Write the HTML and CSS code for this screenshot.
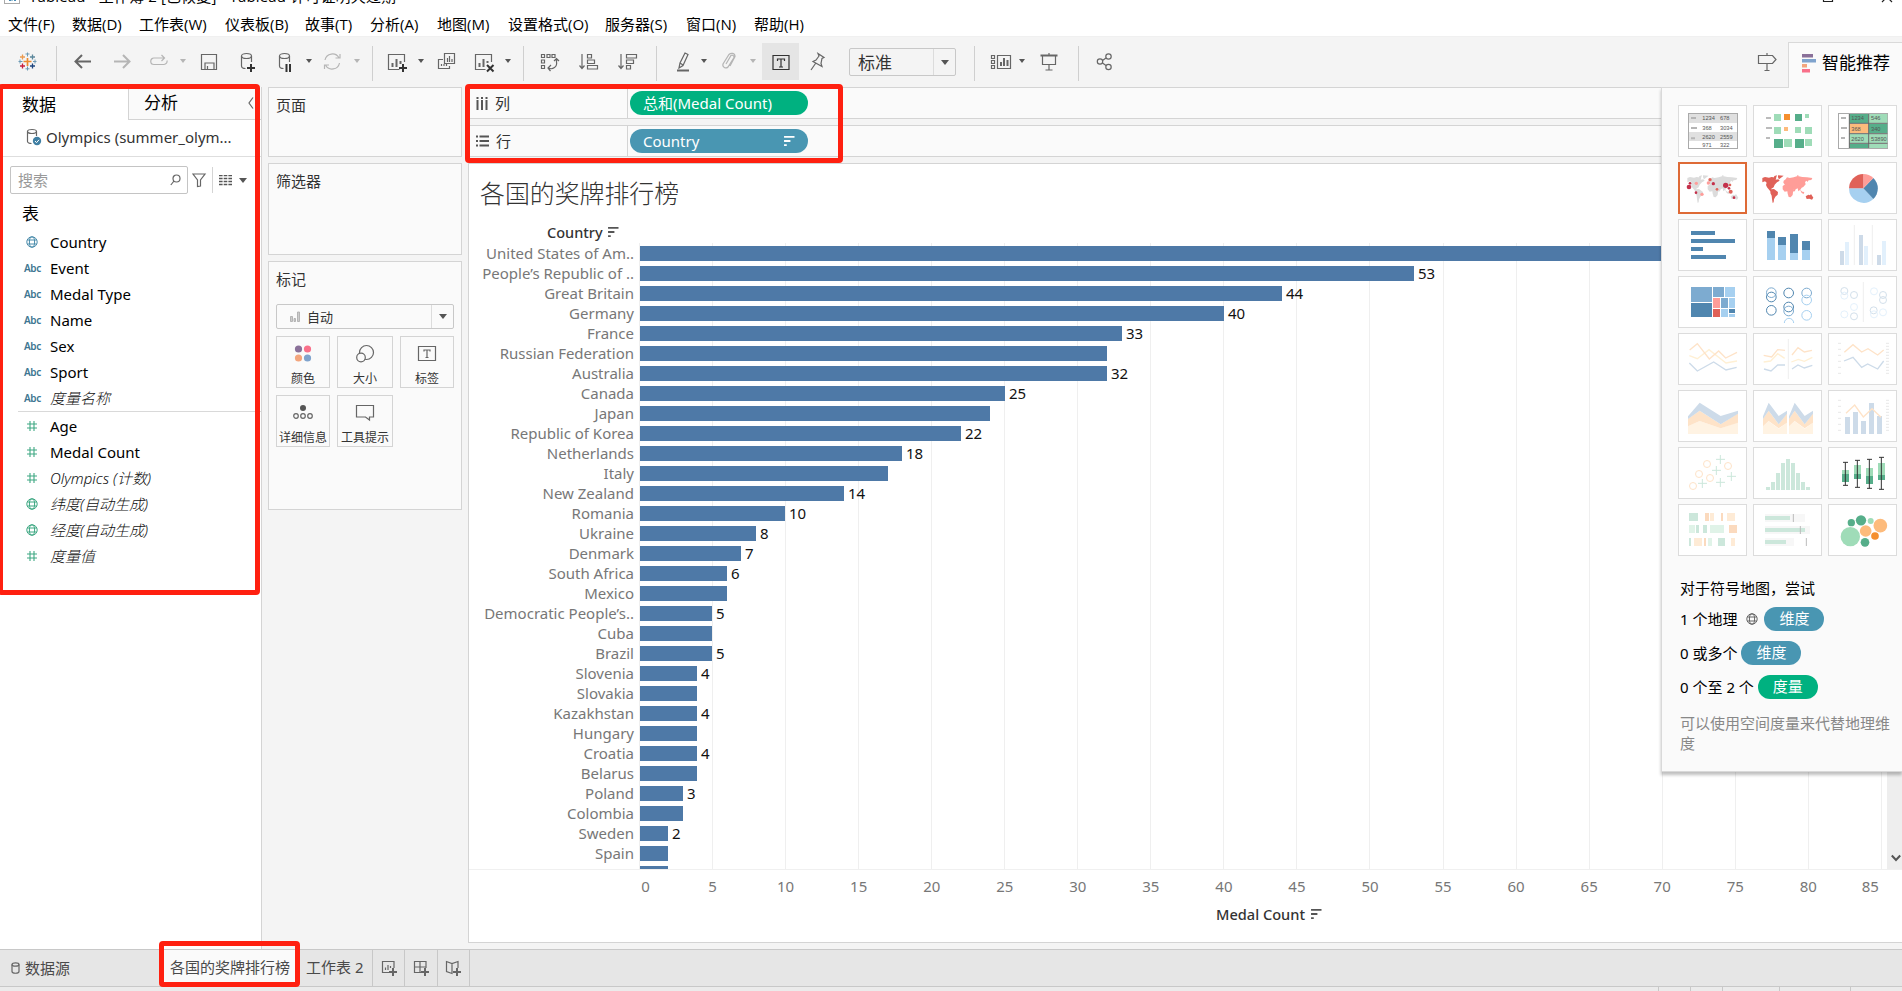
FILE: index.html
```html
<!DOCTYPE html>
<html lang="zh-CN">
<head>
<meta charset="utf-8">
<title>Tableau - 工作簿 2</title>
<link rel="stylesheet" href="styles.css">
</head>
<body>
<svg class="defs" width="0" height="0">
  <defs>
    <symbol id="globe" viewBox="0 0 12 12"><g fill="none" stroke="currentColor"><circle cx="6" cy="6" r="5.2"/><ellipse cx="6" cy="6" rx="2.6" ry="5.2"/><path d="M1.3 4h9.4M1.3 8h9.4"/></g></symbol>
    <symbol id="hash" viewBox="0 0 12 12"><path d="M4 1v10M8 1v10M1 4h10M1 8h10" fill="none" stroke="currentColor" stroke-width="1.1"/></symbol>
    <symbol id="sort" viewBox="0 0 12 11"><path d="M0 1h11.500M0 5.500h7M0 10h3" fill="none" stroke="currentColor" stroke-width="2"/></symbol>
    <symbol id="map-west" viewBox="336 255 160 90"><path d="M337 264l8-3 12 2 8-2 14 2-2 6 8-1 4 4-8 5-7 7-3 8-8 5 1 5 6 2-2 4-6-3-6-7-5-6-3-7 2-7-5-4-8 3zM373 258l8-2-3 8-7 1zM384 256l17 1-8 6-6 5-3-6z"/><path d="M363 298l9-1 12 9-1 8-7 6-4 8-1 9-3 2-2-12-1-10-4-8z"/><path d="M467 319l8-5 5 2 3-4 7 11-4 6-8-3-8 1z"/></symbol>
    <symbol id="map-east" viewBox="336 255 160 90"><path d="M400 278l1-6 6-4 4-6 8 2 12-2 12-4 14 3 14 1 16 2-3 6-8 1-4 5-2-4-5 4 2 7-7 8-5 2-4 6-6 5-2-9-6 3-3 7-5-8-8-2-2-6-7-1-3 4-3-6z"/><path d="M398 288l8-5 12 3 8 2 4 10 4 1-5 8-1 8-6 7-6-1-3-10-1-7-8 1-6-7z"/><path d="M450 299l7 6 6 1-2 6-6-3zM441 256l5-2-2 5z"/></symbol>
  </defs>
</svg>

<header class="top">
  <div class="titlebar">
    <svg class="app-icon" width="16" height="16" viewBox="0 0 16 16"><rect x=".5" y=".5" width="15" height="15" fill="#fff" stroke="#aaa"/><path d="M8 4v9M4 10h8M5 12.500h2M10 12.500h2" stroke="#4a8db5"/></svg>
    <span class="title-text">Tableau - 工作簿 2 [已恢复] - Tableau 许可证明天过期</span>
    <svg class="win-buttons" width="80" height="12" viewBox="0 0 80 12"><path d="M1.500 0v10.500h9V0M60 11l5-5 5 5" fill="none" stroke="#222" stroke-width="1.200"/></svg>
  </div>
  <nav class="menu"><span>文件(F)</span><span>数据(D)</span><span>工作表(W)</span><span>仪表板(B)</span><span>故事(T)</span><span>分析(A)</span><span>地图(M)</span><span>设置格式(O)</span><span>服务器(S)</span><span>窗口(N)</span><span>帮助(H)</span></nav>
</header>

<div class="toolbar">
  <svg class="ic m15" viewBox="0 0 24 24"><g fill="none" stroke-width="1.300"><path d="M12.500 9v8M8.500 12.500h8" stroke="#eb8a2f" stroke-width="1.700"/><path d="M7.500 5.500v5M5 8h5" stroke="#eb9a4f"/><path d="M17.500 5.500v5M15 8h5" stroke="#5b879b"/><path d="M7.500 14.500v5M5 17h5" stroke="#c7203f"/><path d="M17.500 14.500v5M15 17h5" stroke="#1f457e"/><path d="M12.500 3.500v4M10.500 5h4M5 10.500v4M3.500 12.500h4M20 10.500v4M18 12.500h3.500M12.500 17.500v4M10.500 19.800h4" stroke="#6d9ab5" stroke-width="1"/></g></svg>
  <i class="sep m17"></i>
  <svg class="ic m14" viewBox="0 0 24 24"><path d="M20 12.500H5M11 6l-6.500 6.500L11 19" class="ln w2"/></svg>
  <svg class="ic off m15" viewBox="0 0 24 24"><path d="M4 12.500h15M13 6l6.500 6.500L13 19" class="ln w2"/></svg>
  <svg class="ic off m13" viewBox="0 0 24 24"><path d="M17 9H7a3.200 3.200 0 0 0 0 6.500h10a3.200 3.200 0 0 0 3-4M14.500 6l3 3-3 3" class="ln"/></svg>
  <i class="arr off m8"></i>
  <svg class="ic m10" viewBox="0 0 24 24"><path d="M4.500 5.500h15v15h-15zM8 20v-6h9v6M10.500 20v-3" class="ln"/></svg>
  <svg class="ic m14" viewBox="0 0 24 24"><g class="ln"><ellipse cx="11.500" cy="7" rx="5" ry="2.500"/><path d="M6.500 7v10c0 2 2 2.500 4 2.500M16.500 7v6"/></g><path d="M16 15v8M12 19h8" class="ln dk"/></svg>
  <svg class="ic m14" viewBox="0 0 24 24"><g class="ln"><ellipse cx="11.500" cy="7" rx="5" ry="2.500"/><path d="M6.500 7v10c0 2 2 2.500 4 2.500M16.500 7v6"/></g><path d="M13.500 15v8M17 15v8" class="ln dk"/></svg>
  <i class="arr m8"></i>
  <svg class="ic off m7" viewBox="0 0 24 24"><path d="M5 11a7.500 7.500 0 0 1 14-2M19.500 14a7.500 7.500 0 0 1-14 2M15.500 9h4.500V5M9 16H4.500v4" class="ln"/></svg>
  <i class="arr off m9"></i>
  <i class="sep m11"></i>
  <svg class="ic m12" viewBox="0 0 24 24"><path d="M19.500 13V5.500h-16v15h11" class="ln"/><path d="M7.500 18v-4M11.500 18v-8M15.500 15v-3" class="ln w2"/><path d="M18 15v8M14 19h8" class="ln dk"/></svg>
  <i class="arr m8"></i>
  <svg class="ic m9" viewBox="0 0 24 24"><path d="M10.500 4.500h10v10h-10zM9 10.500H4.500v9h11V17M13.500 13V9M15.500 13V7M18 13v-3M7.500 17v-2M10 17v-2M12.500 17v-2" class="ln"/></svg>
  <svg class="ic m14" viewBox="0 0 24 24"><path d="M19.500 13V5.500h-16v15h10" class="ln"/><path d="M7.500 18v-4M11.500 18v-8M15.500 14v-2" class="ln w2"/><path d="M15 16l6.500 6.500M21.500 16L15 22.500" class="ln dk"/></svg>
  <i class="arr m8"></i>
  <i class="sep m11"></i>
  <svg class="ic m13" viewBox="0 0 24 24"><path d="M4.500 5.500h3v3h-3zM10 5.500h3v3h-3zM15 5.500h3v3h-3zM4.500 11h3v3h-3zM4.500 16.500h3v3h-3z" class="ln"/><path d="M19.500 10v3a5.500 5.500 0 0 1-8 6M17 12l2.500-2.500L22 12M14 16l-3 3 2.500 3" class="ln"/></svg>
  <svg class="ic m16" viewBox="0 0 24 24"><path d="M5 5v14M2.500 16.500L5 19.500l2.500-3M10.500 5.500h4v3.500h-4zM10.500 11h7v3.500h-7zM10.500 16.500h10V20h-10z" class="ln"/></svg>
  <svg class="ic m15" viewBox="0 0 24 24"><path d="M5 5v14M2.500 16.500L5 19.500l2.500-3M10.500 5.500h10V9h-10zM10.500 11h7v3.500h-7zM10.500 16.500h4V20h-4z" class="ln"/></svg>
  <i class="sep m16"></i>
  <svg class="ic m14" viewBox="0 0 24 24"><path d="M14 4l3 1.500-5 11-4 2.500 1-5zM9 14l3 2" class="ln"/><path d="M6 21.500h12" class="ln w2"/></svg>
  <i class="arr m5"></i>
  <svg class="ic off m9" viewBox="0 0 24 24"><path d="M9 15l5-8.500a2 2 0 0 1 3 2L11 18a3 3 0 0 1-5-3l6-9.500c2-2 6-1.500 6 2L13 17" class="ln"/></svg>
  <i class="arr off m8"></i>
  <span class="tbtn m5"><svg width="24" height="24" viewBox="0 0 24 24"><path d="M4 5.500h16v14H4zM8.500 11V9h7v2M12 9v8M10 17h4" class="ln" style="stroke:#333"/></svg></span>
  <svg class="ic m6" viewBox="0 0 24 24"><path d="M13 4.500l6 4-2 1-1 5 1 3-9-5 3-1.500 3-4zM10.500 14.500L6 21" class="ln"/></svg>
  <div class="sel fit m20"><span>标准</span><b><i class="arr big"></i></b></div>
  <i class="sep m18"></i>
  <svg class="ic m14" viewBox="0 0 24 24"><path d="M2.500 6.500h3v3h-3zM2.500 11.500h3v3h-3zM2.500 16.500h3v3h-3zM8.500 6.500h13v13h-13z" class="ln"/><path d="M12 17v-4M15 17V9M18.500 17v-6" class="ln w2"/></svg>
  <i class="arr m5"></i>
  <svg class="ic m11" viewBox="0 0 24 24"><path d="M12 4v2M5.500 6.500v9h13v-9M12 16v5M8.500 21h7" class="ln"/><path d="M3.500 6.500h17" class="ln w2"/></svg>
  <i class="sep m17"></i>
  <svg class="ic m14" viewBox="0 0 24 24"><g class="ln"><circle cx="7" cy="12.500" r="2.700"/><circle cx="15.500" cy="7.500" r="2.700"/><circle cx="15.500" cy="18" r="2.700"/><path d="M9.500 11.500l3.500-2.500M9.500 14l3.500 2.500"/></g></svg>
  <svg class="ic push" viewBox="0 0 24 24"><path d="M3.500 6.500h14l3.500 4-3.500 4h-14zM12 4v2.500M12 14.500V21M9.500 21.500h5" class="ln"/></svg>
  <div class="showme-tab">
    <svg width="15" height="20" viewBox="0 0 15 20"><path fill="#8a7099" d="M0 1h11v3.500H0z"/><path fill="#7fa3cd" d="M0 6h14v3.500H0z"/><path fill="#f3a57d" d="M0 11h5v3.500H0z"/><path fill="#f9708a" d="M0 16h8v3.500H0z"/></svg>
    <span>智能推荐</span>
  </div>
</div>

<div class="main">
  <aside class="data">
    <div class="dtabs"><span class="on">数据</span><span class="offtab">分析<svg width="6" height="12" viewBox="0 0 6 12"><path d="M5 .5L1 6l4 5.500" class="ln"/></svg></span></div>
    <div class="source"><svg width="16" height="18" viewBox="0 0 16 18"><g class="ln"><ellipse cx="6" cy="3.500" rx="4.500" ry="2"/><path d="M1.500 3.500v10c0 1 2 2 4 2M10.500 3.500V8"/></g><circle cx="11" cy="13" r="4.200" fill="#3f7fa3"/><path d="M9 13l1.500 1.700L13 11.800" fill="none" stroke="#fff"/></svg><span>Olympics (summer_olym...</span></div>
    <div class="searchrow">
      <div class="search"><span>搜索</span><svg width="11" height="12" viewBox="0 0 11 12"><circle cx="6.500" cy="4.500" r="3.500" class="ln"/><path d="M4 7L.8 11" class="ln"/></svg></div>
      <svg class="funnel" width="15" height="15" viewBox="0 0 15 15"><path d="M1 1h12L8.500 7v6l-3 .5V7z" class="ln"/></svg>
      <i class="vs"></i>
      <svg class="list" width="13" height="11" viewBox="0 0 13 11"><path d="M0 .5h13M0 3.500h13M0 6.500h13M0 9.500h13" stroke="#555" stroke-width="1.300" stroke-dasharray="3.600 1.100"/></svg>
      <i class="arr big"></i>
    </div>
    <h3>表</h3>
    <ul class="fields">
      <li class="dim"><svg width="12" height="12"><use href="#globe"/></svg>Country</li>
      <li class="dim"><b>Abc</b>Event</li>
      <li class="dim"><b>Abc</b>Medal Type</li>
      <li class="dim"><b>Abc</b>Name</li>
      <li class="dim"><b>Abc</b>Sex</li>
      <li class="dim"><b>Abc</b>Sport</li>
      <li class="dim"><b>Abc</b><em>度量名称</em></li>
    </ul>
    <ul class="fields measures">
      <li><svg width="12" height="12"><use href="#hash"/></svg>Age</li>
      <li><svg width="12" height="12"><use href="#hash"/></svg>Medal Count</li>
      <li><svg width="12" height="12"><use href="#hash"/></svg><em>Olympics (计数)</em></li>
      <li><svg width="12" height="12"><use href="#globe"/></svg><em>纬度(自动生成)</em></li>
      <li><svg width="12" height="12"><use href="#globe"/></svg><em>经度(自动生成)</em></li>
      <li><svg width="12" height="12"><use href="#hash"/></svg><em>度量值</em></li>
    </ul>
  </aside>

  <section class="cards">
    <div class="card pages">页面</div>
    <div class="card filters">筛选器</div>
    <div class="card marks">
      <div>标记</div>
      <div class="sel marktype"><svg width="10" height="11" viewBox="0 0 10 11"><path d="M.5 5.500h2v5h-2zM4 7.500h1.500v3H4zM7.500 1h2v9.500h-2z" fill="#ccc" stroke="#aaa" stroke-width=".8"/></svg><span>自动</span><b><i class="arr big"></i></b></div>
      <div class="mgrid">
        <div><svg width="20" height="20" viewBox="0 0 20 20"><circle cx="5.500" cy="5" r="3.600" fill="#8a7099"/><circle cx="14.500" cy="5" r="3.600" fill="#f9708a"/><circle cx="5.500" cy="14" r="3.600" fill="#f3a57d"/><circle cx="14.500" cy="14" r="3.600" fill="#7fa3cd"/></svg>颜色</div>
        <div><svg width="20" height="20" viewBox="0 0 20 20"><g class="ln"><circle cx="11.500" cy="8.500" r="7"/><circle cx="6" cy="13.500" r="4.300" style="fill:#fafafa"/></g></svg>大小</div>
        <div><svg width="20" height="20" viewBox="0 0 20 20"><path d="M1.500 2.500h17v14h-17zM7 7.500V6h6v1.500M10 6v7.500M8.500 13.500h3" class="ln"/></svg>标签</div>
        <div><svg width="20" height="20" viewBox="0 0 20 20"><circle cx="10" cy="5" r="3" fill="#555"/><g class="ln"><circle cx="3" cy="13" r="2.300"/><circle cx="10" cy="13" r="2.300"/><circle cx="17" cy="13" r="2.300"/></g></svg>详细信息</div>
        <div><svg width="20" height="20" viewBox="0 0 20 20"><path d="M1.500 2.500h17v11.500h-4V17l-4-3h-9z" class="ln"/></svg>工具提示</div>
      </div>
    </div>
  </section>

  <section class="work">
    <div class="shelf"><div class="sl"><svg width="12" height="13" viewBox="0 0 12 13"><path d="M1.500 3v10M6 3v10M10.500 3v10M1.500 0v2M6 0v2M10.500 0v2" stroke="#555" stroke-width="2"/></svg>列</div><div class="pill green">总和(Medal Count)</div></div>
    <div class="shelf"><div class="sl"><svg width="13" height="12" viewBox="0 0 13 12"><path d="M3.500 1.500H13M3.500 6H13M3.500 10.500H13M0 1.500h2M0 6h2M0 10.500h2" stroke="#555" stroke-width="2"/></svg>行</div><div class="pill blue">Country<svg width="11" height="10"><use href="#sort"/></svg></div></div>
    <div class="view">
      <h1>各国的奖牌排行榜</h1>
      <div class="colhead">Country<svg width="11" height="10"><use href="#sort"/></svg></div>
      <div class="chart">
        <div class="grid"><i></i><i></i><i></i><i></i><i></i><i></i><i></i><i></i><i></i><i></i><i></i><i></i><i></i><i></i><i></i><i></i><i></i><i></i></div>
        <div class="rows">
          <div class="row"><span>United States of Am..</span><i style="width:1183px"></i></div>
          <div class="row"><span>People’s Republic of ..</span><i style="width:774px"></i>53</div>
          <div class="row"><span>Great Britain</span><i style="width:642px"></i>44</div>
          <div class="row"><span>Germany</span><i style="width:584px"></i>40</div>
          <div class="row"><span>France</span><i style="width:482px"></i>33</div>
          <div class="row"><span>Russian Federation</span><i style="width:467px"></i></div>
          <div class="row"><span>Australia</span><i style="width:467px"></i>32</div>
          <div class="row"><span>Canada</span><i style="width:365px"></i>25</div>
          <div class="row"><span>Japan</span><i style="width:350px"></i></div>
          <div class="row"><span>Republic of Korea</span><i style="width:321px"></i>22</div>
          <div class="row"><span>Netherlands</span><i style="width:262px"></i>18</div>
          <div class="row"><span>Italy</span><i style="width:248px"></i></div>
          <div class="row"><span>New Zealand</span><i style="width:204px"></i>14</div>
          <div class="row"><span>Romania</span><i style="width:145px"></i>10</div>
          <div class="row"><span>Ukraine</span><i style="width:116px"></i>8</div>
          <div class="row"><span>Denmark</span><i style="width:101px"></i>7</div>
          <div class="row"><span>South Africa</span><i style="width:87px"></i>6</div>
          <div class="row"><span>Mexico</span><i style="width:87px"></i></div>
          <div class="row"><span>Democratic People’s..</span><i style="width:72px"></i>5</div>
          <div class="row"><span>Cuba</span><i style="width:72px"></i></div>
          <div class="row"><span>Brazil</span><i style="width:72px"></i>5</div>
          <div class="row"><span>Slovenia</span><i style="width:57px"></i>4</div>
          <div class="row"><span>Slovakia</span><i style="width:57px"></i></div>
          <div class="row"><span>Kazakhstan</span><i style="width:57px"></i>4</div>
          <div class="row"><span>Hungary</span><i style="width:57px"></i></div>
          <div class="row"><span>Croatia</span><i style="width:57px"></i>4</div>
          <div class="row"><span>Belarus</span><i style="width:57px"></i></div>
          <div class="row"><span>Poland</span><i style="width:43px"></i>3</div>
          <div class="row"><span>Colombia</span><i style="width:43px"></i></div>
          <div class="row"><span>Sweden</span><i style="width:28px"></i>2</div>
          <div class="row"><span>Spain</span><i style="width:28px"></i></div>
          <div class="row"><span>Norway</span><i style="width:28px"></i>2</div>
        </div>
        <div class="scroll"><svg width="10" height="8" viewBox="0 0 10 8"><path d="M.8 1.500L5 6l4.200-4.500" fill="none" stroke="#555" stroke-width="2"/></svg></div>
      </div>
      <div class="axis"><span class="first">0</span><span>5</span><span>10</span><span>15</span><span>20</span><span>25</span><span>30</span><span>35</span><span>40</span><span>45</span><span>50</span><span>55</span><span>60</span><span>65</span><span>70</span><span>75</span><span>80</span><span class="last">85</span></div>
      <div class="axtitle">Medal Count<svg width="11" height="10"><use href="#sort"/></svg></div>
    </div>
  </section>
</div>

<footer class="tabs">
  <div class="ds"><svg width="9" height="12" viewBox="0 0 9 12"><g class="ln"><ellipse cx="4.500" cy="2.500" rx="3.500" ry="1.700"/><path d="M1 2.500v7c0 2.300 7 2.300 7 0v-7"/></g></svg>数据源</div>
  <div class="tab active">各国的奖牌排行榜</div>
  <div class="tab second">工作表 2</div>
  <div class="tic"><svg width="16" height="16" viewBox="0 0 16 16"><path d="M13 8V1.500H1.500v11H9M4.500 10V7.500M7 10V5M9.500 8V6" class="ln"/><path d="M12 8v8M8 12h8" class="ln w2"/></svg></div>
  <div class="tic"><svg width="16" height="16" viewBox="0 0 16 16"><path d="M13 8V1.500H1.500v11H9M7 1.500v11M1.500 7H13" class="ln"/><path d="M12 8v8M8 12h8" class="ln w2"/></svg></div>
  <div class="tic"><svg width="16" height="16" viewBox="0 0 16 16"><path d="M13 8V1.500L7 3.500l-5.500-2v10l5.500 2V3.500" class="ln"/><path d="M12 8v8M8 12h8" class="ln w2"/></svg></div>
</footer>
<div class="status"><i></i><i></i><i></i><i></i><i></i></div>

<aside class="showme">
  <div class="thumbs">
    <svg viewBox="84 45 207 156"><rect x="115.500" y="70.500" width="147" height="105" fill="#fff" stroke="#aaa" stroke-width="3"/><path fill="#e0e0e0" d="M117 72h144v27H117zM117 126h144v27H117z"/><path stroke="#b5b5b5" stroke-width="6" d="M123 84h15M123 114h18M123 145h12"/><g class="num"><text x="157" y="91">1234</text><text x="210" y="91">678</text><text x="157" y="119">368</text><text x="210" y="119">3034</text><text x="157" y="146">2620</text><text x="210" y="146">2559</text><text x="157" y="170">971</text><text x="210" y="170">322</text></g></svg>
    <svg viewBox="309 45 207 156"><path stroke="#bbb" stroke-width="6" d="M348 84h15M348 114h18M348 144h12"/><path fill="#9fdcb8" d="M372 72h21v21h-21zM465 72h12v12h-12zM372 111h21v21h-21zM435 111h18v18h-18zM465 111h21v21h-21zM402 147h24v24h-24zM465 147h21v21h-21z"/><path fill="#56ae8a" d="M435 72h21v21h-21zM372 147h27v27h-27zM435 147h27v27h-27z"/><path fill="#f58f2e" d="M402 72h18v18h-18z"/><path fill="#fdbb7c" d="M402 111h12v12h-12z"/></svg>
    <svg viewBox="534 45 207 156"><rect x="565.500" y="70.500" width="147" height="105" fill="#fff" stroke="#aaa" stroke-width="3"/><path stroke="#b5b5b5" stroke-width="6" d="M573 84h15M573 114h18M573 144h12"/><path fill="#56ae8a" d="M598 72h57v27h-57zM656 102h56v27h-56zM598 162h57v12h-57z"/><path fill="#9fdcb8" d="M656 72h56v27h-56zM598 132h57v27h-57zM656 132h56v27h-56zM656 162h56v12h-56z"/><path fill="#fdbb7c" d="M598 102h57v27h-57z"/><path stroke="#666" stroke-width="3" fill="none" d="M598 72v102M656 72v102M598 100h114M598 131h114M598 160h114"/><g class="num"><text x="604" y="91">1234</text><text x="663" y="91">546</text><text x="604" y="122">368</text><text x="663" y="122">340</text><text x="604" y="152">2620</text><text x="663" y="152">53890</text></g></svg>

    <svg class="picked" viewBox="84 216 207 156"><use href="#map-west" x="111" y="255" width="160" height="90" fill="#dcdcdc"/><use href="#map-east" x="111" y="255" width="160" height="90" fill="#dcdcdc"/><g fill="#c4314b"><circle cx="117" cy="291" r="7"/><circle cx="120" cy="280" r="4"/><circle cx="190" cy="281" r="5"/><circle cx="227" cy="286" r="8"/><circle cx="138" cy="308" r="4"/><circle cx="237" cy="295" r="4"/><circle cx="252" cy="323" r="4"/></g><g fill="#e0655b"><circle cx="180" cy="269" r="5"/><circle cx="201" cy="298" r="4"/><circle cx="242" cy="305" r="6"/><circle cx="240" cy="285" r="4"/></g><g fill="#ff9d9a"><circle cx="139" cy="280" r="5"/><circle cx="175" cy="279" r="5"/><circle cx="156" cy="313" r="5"/></g></svg>
    <svg viewBox="309 216 207 156"><use href="#map-west" x="336" y="255" width="160" height="90" fill="#e06158"/><use href="#map-east" x="336" y="255" width="160" height="90" fill="#ff9d98"/></svg>
    <svg viewBox="534 216 207 156"><path fill="#a6d0f0" d="M640 295h-43a43.500 43.500 0 0 0 73 32z"/><path fill="#5086af" d="M640 295l30 32a43.500 43.500 0 0 0 0-63z"/><path fill="#ff9d98" d="M640 295l30-31a43.500 43.500 0 0 0-30-12z"/><path fill="#e06158" d="M640 295v-43a43.500 43.500 0 0 0-43 43z"/></svg>

    <svg viewBox="84 387 207 156"><path fill="#5086af" d="M123 423h72v12h-72zM123 447h132v12H123zM123 471h36v12h-36zM123 495h105v12H123z"/></svg>
    <svg viewBox="309 387 207 156"><path fill="#a6d0f0" d="M351 444h24v66h-24zM384 465h24v45h-24zM420 489h24v21h-24zM456 480h24v30h-24z"/><path fill="#5086af" d="M351 423h24v21h-24zM384 441h24v24h-24zM420 432h24v57h-24zM456 453h24v27h-24z"/></svg>
    <svg viewBox="534 387 207 156"><path fill="#cddae8" d="M570 483h12v42h-12zM627 435h12v90h-12zM681 495h12v30h-12z"/><path fill="#e2f0fc" d="M585 456h12v69h-12zM642 468h12v57h-12zM696 453h12v72h-12z"/><path stroke="#eee" stroke-width="3" d="M613 405v120M667 405v120"/></svg>

    <svg viewBox="84 558 207 156"><path fill="#7dabd0" d="M123 591h63v45h-63zM189 591h33v30h-33zM213 624h21v30h-21z"/><path fill="#5086af" d="M123 639h63v42h-63zM237 657h18v12h-18z"/><path fill="#a6d0f0" d="M225 591h30v30h-30zM237 624h18v30h-18zM213 657h21v24h-21zM237 672h18v9h-18z"/><path fill="#ff9d98" d="M189 624h21v30h-21z"/><path fill="#e06158" d="M189 657h21v24h-21z"/></svg>
    <svg viewBox="309 558 207 156"><g fill="none" stroke-width="3" stroke="#5086af"><circle cx="364" cy="621" r="14.500"/><circle cx="364" cy="661" r="14.500"/><circle cx="416" cy="609" r="14.500"/><circle cx="416" cy="651" r="14.500"/></g><g fill="none" stroke-width="3" stroke="#7dabd0"><circle cx="364" cy="608" r="14.500"/><circle cx="470" cy="609" r="14.500"/><circle cx="416" cy="663" r="14.500"/></g><g fill="none" stroke-width="3" stroke="#a6d0f0"><circle cx="470" cy="630" r="14.500"/><circle cx="470" cy="676" r="14.500"/><path d="M403 699a14 14 0 0 1 28 0"/></g></svg>
    <svg viewBox="534 558 207 156"><path stroke="#eee" stroke-width="3" d="M640 576v120"/><g fill="none" stroke-width="3" stroke="#d3e0eb"><circle cx="583" cy="603" r="10.500"/><circle cx="612" cy="615" r="10.500"/><circle cx="612" cy="679" r="10.500"/><circle cx="699" cy="615" r="10.500"/><circle cx="699" cy="630" r="10.500"/><circle cx="671" cy="661" r="10.500"/></g><g fill="none" stroke-width="3" stroke="#e4f1fc"><circle cx="583" cy="617" r="10.500"/><circle cx="612" cy="651" r="10.500"/><circle cx="583" cy="673" r="10.500"/><circle cx="672" cy="604" r="10.500"/><circle cx="699" cy="667" r="10.500"/><circle cx="672" cy="673" r="10.500"/></g></svg>

    <svg viewBox="84 24 207 156"><g fill="none" stroke-width="4"><path stroke="#fff0d4" d="M118 92l24 9 35-27 51 40 33-6"/><path stroke="#fee3c8" d="M119 75l23-19 36 46 28-24 21 21 34-17"/><path stroke="#cddbe9" d="M118 114l24 24 49-27 37 24 32-8"/></g></svg>
    <svg viewBox="309 24 207 156"><path stroke="#eee" stroke-width="3" d="M415 42v120"/><g fill="none" stroke-width="4"><path stroke="#fff0d4" d="M341 111l21-3 21-22 21 14M424 111l21-8 18 6 24-12"/><path stroke="#fee3c8" d="M341 91l24 5 18-22 22 2M426 90l18-22 19 13 23-5"/><path stroke="#cddbe9" d="M342 132l21 6 20-18h22M426 132l18-12 19 9 24-8"/></g></svg>
    <svg viewBox="534 24 207 156"><path stroke="#e8e8e8" stroke-width="3" fill="none" d="M564 55h9M564 73h9M564 91h9M564 109h9M564 127h9M564 145h9M708 55h9M708 64h9M708 73h9M708 82h9M708 91h9M708 100h9M708 109h9M708 118h9M708 127h9M708 136h9M708 145h9"/><g fill="none" stroke-width="4"><path stroke="#fee3c8" d="M583 82l26-23 26 22 19-10 29 19 18-15"/><path stroke="#cddbe9" d="M582 108l27-11 26 30 18-10 30 15 18-24"/></g></svg>

    <svg viewBox="84 195 207 156"><path fill="#fff3e3" d="M114 304l35-16 63 22 52-18v35H114z"/><path fill="#fee3c8" d="M114 281l35-24 63 41 52-33v28l-52 17-63-22-35 16z"/><path fill="#cddbe9" d="M114 274l35-41 63 40 52-16v9l-52 32-63-41-35 25z"/></svg>
    <svg viewBox="309 195 207 156"><path fill="#fff3e3" d="M339 304l17-15 30 22 25-18v34h-72zM417 304l17-15 30 22 25-18v34h-72z"/><path fill="#fee3c8" d="M339 281l17-24 30 41 25-33v28l-25 17-30-22-17 16zM417 281l17-24 30 41 25-33v28l-25 17-30-22-17 16z"/><path fill="#cddbe9" d="M339 274l17-41 30 40 25-16v9l-25 32-30-41-17 25zM417 274l17-41 30 40 25-16v9l-25 32-30-41-17 25z"/></svg>
    <svg viewBox="534 195 207 156"><path stroke="#e8e8e8" stroke-width="3" d="M564 226h9M564 244h9M564 262h9M564 280h9M564 298h9M564 316h9M708 226h9M708 235h9M708 244h9M708 253h9M708 262h9M708 271h9M708 280h9M708 289h9M708 298h9M708 307h9M708 316h9"/><path fill="#cddbe9" d="M585 276h15v51h-15zM609 261h15v66h-15zM633 288h15v39h-15zM657 234h15v93h-15zM681 273h15v54h-15z"/><path fill="none" stroke="#fee3c8" stroke-width="4" d="M588 265l26-25 26 36 26-25 27 26"/></svg>

    <svg viewBox="84 366 207 156"><g fill="none" stroke-width="3"><g stroke="#fee3c8"><circle cx="171" cy="417" r="10.500"/><circle cx="234" cy="423" r="10.500"/><circle cx="147" cy="447" r="10.500"/><circle cx="180" cy="459" r="10.500"/><circle cx="129" cy="483" r="10.500"/></g><path stroke="#cce7db" d="M211 390v27M198 403h27M199 423v27M186 436h27M244 441v27M231 454h27M157 462v27M144 475h27M211 459v27M198 472h27"/></g></svg>
    <svg viewBox="309 366 207 156"><path fill="#cce7db" d="M348 486h12v9h-12zM363 471h12v24h-12zM378 444h12v51h-12zM393 414h12v81h-12zM408 402h12v93h-12zM423 414h12v81h-12zM438 444h12v51h-12zM453 471h12v24h-12zM468 486h12v9h-12z"/></svg>
    <svg viewBox="534 366 207 156"><path fill="#9fdcb8" d="M576 435h21v12h-21zM612 420h21v27h-21zM648 429h21v24h-21zM684 414h21v36h-21z"/><path fill="#56ae8a" d="M576 447h21v24h-21zM612 447h21v15h-21zM648 453h21v24h-21zM684 450h21v15h-21z"/><path fill="none" stroke="#333" stroke-width="3" d="M586 412v69M579 412h15M579 481h15M622 406v81M615 406h15M615 487h15M658 403v87M651 403h15M651 490h15M694 397v96M687 397h15M687 493h15"/></svg>

    <svg viewBox="84 537 207 156"><path fill="#cce7db" d="M117 564h27v24h-27zM138 600h9v24h-9zM159 600h12v24h-12zM117 639h6v24h-6zM204 639h21v24h-21z"/><path fill="#e0f3e8" d="M117 600h18v24h-18zM180 600h42v24h-42zM174 639h12v24h-12z"/><path fill="#fbdabe" d="M165 564h12v24h-12zM213 564h6v24h-6zM237 600h24v24h-24zM162 639h6v24h-6z"/><path fill="#feebd6" d="M180 564h12v24h-12zM231 564h24v24h-24zM132 639h24v24h-24zM243 639h12v24h-12z"/></svg>
    <svg viewBox="309 537 207 156"><path fill="#f7f7f7" d="M345 567h120v24H345zM345 603h135v24H345zM345 639h87v24h-87z"/><path fill="#cce7db" d="M345 573h75v12h-75zM345 609h120v12H345zM345 645h63v12h-63z"/><path stroke="#bbb" stroke-width="3" d="M430 567v24M451 603v24M469 639v24"/></svg>
    <svg viewBox="534 537 207 156"><g fill="#9fdcb8"><circle cx="601" cy="635" r="29"/><circle cx="662" cy="588" r="9"/></g><g fill="#56ae8a"><circle cx="604" cy="593" r="11"/><circle cx="633" cy="586" r="15.500"/><circle cx="645" cy="652" r="13"/></g><g fill="#fdbb7c"><circle cx="647" cy="618" r="17.500"/><circle cx="691" cy="602" r="20.500"/></g><circle cx="675" cy="633" r="11.500" fill="#f58f2e"/></svg>
  </div>
  <div class="hint">
    <p>对于符号地图，尝试</p>
    <p class="r2">1 个地理 <svg width="12" height="12"><use href="#globe"/></svg><b class="blue">维度</b></p>
    <p>0 或多个 <b class="blue">维度</b></p>
    <p>0 个至 2 个 <b class="green">度量</b></p>
    <p class="note">可以使用空间度量来代替地理维度</p>
  </div>
</aside>

<div class="mark mark-data"></div>
<div class="mark mark-shelf"></div>
<div class="mark mark-tab"></div>
</body>
</html>
```
FILE: styles.css
```css
* { box-sizing: border-box; }
body { margin: 0; width: 1902px; height: 991px; overflow: hidden; position: relative; background: #f4f4f4; color: #000; font: 15px/20px "Noto Sans", "Noto Sans CJK SC", sans-serif; display: flex; flex-direction: column; }
.defs { position: absolute; }
svg { flex: none; display: block; }
h1, h3, p, ul { margin: 0; padding: 0; font-weight: 400; }
i, em { font-style: normal; }
.ln { fill: none; stroke: #666; stroke-width: 1.2; }
.w2 { stroke-width: 2; }
.dk { stroke: #333; stroke-width: 2; }
.off .ln { stroke: #b5b5b5; }

.top { height: 36px; background: #fff; overflow: hidden; flex: none; font-family: "Open Sans", "Noto Sans CJK SC", sans-serif; }
.titlebar { height: 20px; margin-top: -12px; display: flex; align-items: flex-start; }
.app-icon { margin-left: 4px; }
.title-text { margin-left: 9px; font-size: 15px; line-height: 18px; margin-top: -1px; letter-spacing: .15px; }
.win-buttons { margin: 3px 0 0 auto; width: 80px; }
.menu { display: grid; grid-template-columns: 64px 67px 86px 80px 65px 67px 71px 97px 81px 68px 80px; padding-left: 8px; margin-top: 5px; line-height: 22px; white-space: nowrap; }

.toolbar { height: 51px; flex: none; display: flex; align-items: center; border-top: 1px solid #f0f0f0; padding-bottom: 2px; }
.ic { width: 24px; height: 24px; }
.sep { width: 1px; height: 35px; background: #cfcfcf; margin-top: 4px; }
.arr { width: 0; height: 0; border: 3px solid transparent; border-top: 4px solid #555; border-bottom: 0; margin-right: 1px; flex: none; }
.arr.off { border-top-color: #b5b5b5; }
.arr.big { border-width: 4px; border-bottom: 0; border-top-width: 5px; margin: 0; }
.arr.m5 { margin-left: 6px; } .arr.m8 { margin-left: 9px; } .arr.m9 { margin-left: 10px; }
.m5 { margin-left: 5px; } .m6 { margin-left: 6px; } .m7 { margin-left: 7px; } .m8 { margin-left: 8px; } .m9 { margin-left: 9px; } .m10 { margin-left: 10px; } .m11 { margin-left: 11px; } .m12 { margin-left: 12px; } .m13 { margin-left: 13px; } .m14 { margin-left: 14px; } .m15 { margin-left: 15px; } .m16 { margin-left: 16px; } .m17 { margin-left: 17px; } .m18 { margin-left: 18px; } .m20 { margin-left: 20px; }
.tbtn { width: 37px; height: 37px; background: #e5e5e5; display: flex; align-items: center; justify-content: center; margin-top: 1px; }
.sel { border: 1px solid #c8c8c8; border-radius: 2px; display: flex; align-items: stretch; }
.sel b { margin-left: auto; border-left: 1px solid #dcdcdc; display: flex; align-items: center; justify-content: center; }
.fit { width: 107px; height: 28px; font-size: 17px; line-height: 28px; color: #333; padding-left: 8px; margin-top: 2px; }
.fit b { width: 22px; }
.push { margin-left: auto; margin-right: 9px; }
.showme-tab { width: 114px; height: 45px; align-self: flex-end; margin-bottom: -2px; background: #fafafa; border: 1px solid #d9d9d9; border-width: 1px 0 0 1px; display: flex; align-items: center; gap: 5px; padding: 0 0 5px 13px; font-size: 17px; white-space: nowrap; }

.main { display: flex; height: 862px; flex: none; }
.data { width: 262px; flex: none; background: #fff; border-right: 1px solid #d4d4d4; }
.dtabs { display: flex; height: 33px; font-size: 17px; line-height: 35px; }
.on { width: 128px; padding-left: 22px; }
.offtab { flex: 1; display: flex; align-items: center; justify-content: space-between; background: #fafafa; border: 1px solid #d4d4d4; border-width: 0 0 1px 1px; padding: 0 7px 0 15px; line-height: 32px; }
.source { height: 37px; display: flex; align-items: center; padding: 0 0 2px 26px; gap: 4px; color: #333; border-bottom: 1px solid #dedede; white-space: nowrap; }
.searchrow { display: flex; align-items: center; padding: 9px 0 0 10px; }
.search { width: 178px; height: 28px; border: 1px solid #c4c4c4; border-radius: 2px; display: flex; align-items: center; justify-content: space-between; color: #999; padding: 0 6px 0 7px; }
.funnel { margin-left: 4px; }
.vs { width: 1px; height: 26px; background: #d4d4d4; margin: 0 6px 0 5px; }
.list { margin-right: 7px; }
.data h3 { font-size: 17px; line-height: 24px; padding: 8px 0 0 22px; height: 36px; }
.fields { list-style: none; margin-left: 18px; }
.fields li { height: 26px; line-height: 24px; display: flex; align-items: center; padding: 0 0 2px 6px; color: #000; white-space: nowrap; }
.fields li svg { width: 12px; height: 12px; margin: 0 12px 0 2px; color: #3fa883; }
.fields li.dim svg { color: #4a8cab; }
.fields b { width: 26px; font-size: 10px; font-weight: 600; color: #3d7691; letter-spacing: -.4px; }
.fields em { font-style: italic; font-weight: 300; color: #111; }
.measures { border-top: 1px solid #d9d9d9; margin-top: -1px; padding-top: 2px; }

.cards { width: 206px; flex: none; padding-left: 6px; }
.card { width: 194px; background: #fafafa; border: 1px solid #d4d4d4; padding-left: 7px; color: #333; margin-bottom: 6px; }
.pages { height: 70px; line-height: 34px; }
.filters { height: 92px; line-height: 34px; }
.marks { height: 249px; line-height: 34px; }
.marktype { width: 178px; height: 25px; font-size: 13px; line-height: 24px; margin-top: 8px; align-items: center; padding-left: 13px; }
.marktype span { margin-left: 7px; }
.marktype b { width: 22px; height: 23px; }
.mgrid { display: grid; grid-template-columns: 54px 56px 54px; gap: 7px; margin-top: 7px; }
.mgrid div { height: 52px; border: 1px solid #d4d4d4; font-size: 12px; line-height: 14px; display: flex; flex-direction: column; align-items: center; padding-top: 7px; gap: 8px; white-space: nowrap; }

.work { flex: 1; min-width: 0; }
.shelf { height: 32px; border: 1px solid #d4d4d4; border-width: 1px 0 1px 1px; background: #fafafa; display: flex; align-items: center; margin-bottom: 6px; color: #333; }
.sl { width: 159px; height: 30px; border-right: 1px solid #d4d4d4; display: flex; align-items: center; padding-left: 7px; gap: 7px; }
.pill { width: 178px; height: 24px; border-radius: 12px; margin-left: 2px; padding: 0 13px; color: #fff; line-height: 23px; display: flex; align-items: center; justify-content: space-between; }
.green { background: #00b180; }
.blue { background: #4996b2; }
.view { height: 780px; background: #fff; border: 1px solid #d4d4d4; border-right: 0; }
.view h1 { font-size: 24.900px; font-weight: 300; line-height: 30px; padding: 14px 0 0 11px; color: #333; height: 57px; }
.colhead { height: 22px; padding: 0 0 1px 78px; display: flex; align-items: center; gap: 5px; color: #333; font-weight: 500; font-size: 14.500px; }
.colhead svg, .axtitle svg { color: #555; }
.chart { position: relative; height: 627px; overflow: hidden; border-bottom: 1px solid #f0f0f0; }
.grid { position: absolute; left: 170px; top: 0; bottom: 0; display: flex; }
.grid i { width: 73.050px; border-left: 1px solid #efefef; }
.rows { position: relative; }
.row { height: 20px; display: flex; align-items: center; color: #111; font-size: 15px; }
.row span { width: 165px; text-align: right; color: #777; flex: none; white-space: nowrap; }
.row i { height: 15px; background: #4e79a7; margin: 0 4px 0 6px; flex: none; }
.scroll { position: absolute; right: 0; top: 0; bottom: 0; width: 15px; background: #eee; display: flex; align-items: flex-end; justify-content: flex-end; padding: 0 1px 7px 0; }
.axis { display: grid; grid-template-columns: repeat(18, 73.050px); margin: 6px 0 0 134px; color: #777; font-size: 15px; text-align: center; }
.first { padding-left: 12px; }
.last { padding-right: 22px; }
.axtitle { display: flex; align-items: center; gap: 6px; padding: 8px 0 0 747px; color: #333; font-weight: 500; font-size: 14.600px; }

.tabs { height: 38px; flex: none; background: #e6e6e6; border: 1px solid #c8c8c8; border-width: 1px 0; display: flex; line-height: 34px; color: #4a4a4a; }
.ds { width: 160px; display: flex; align-items: center; gap: 5px; padding: 0 0 1px 11px; }
.tab.active { width: 140px; background: #fafafa; padding-left: 10px; }
.tab.second { width: 73px; padding-left: 6px; border-right: 1px solid #c8c8c8; }
.tab { white-space: nowrap; }
.tic { width: 32.300px; border-right: 1px solid #c8c8c8; display: flex; align-items: center; justify-content: center; }
.status { flex: 1; background: #ebebeb; display: flex; padding-left: 1658px; }
.status i { border-left: 1px solid #c8c8c8; width: 32px; }
.status i:nth-child(3) { width: 57px; }
.status i:nth-child(4) { width: 71px; }

.showme { position: absolute; left: 1661px; top: 87px; width: 241px; height: 685px; background: #fafafa; border: 1px solid #d9d9d9; border-width: 0 0 1px 1px; box-shadow: 0 3px 3px rgba(0, 0, 0, .25); padding: 18px 0 0 16px; }
.showme::before { content: ""; position: absolute; left: 0; top: 0; width: 127px; height: 1px; background: #d9d9d9; }
.thumbs { display: grid; grid-template-columns: repeat(3, 69px); gap: 5px 6px; }
.thumbs > svg { width: 69px; height: 52px; background: #fff; outline: 1px solid #dcdcdc; outline-offset: -1px; }
.thumbs > .picked { outline: 2px solid #de6a36; outline-offset: -2px; }
.num text { font: 17px "Liberation Sans", sans-serif; fill: #555; }
.hint { padding: 20px 0 0 2px; }
.hint p { height: 34px; line-height: 26px; display: flex; align-items: center; white-space: pre; padding-bottom: 10px; }
.hint p:first-child { height: 31px; padding-bottom: 7px; }
.hint p svg { margin: 0 6px 0 5px; color: #666; }
.hint b { width: 60px; height: 24px; border-radius: 12px; color: #fff; font-weight: 400; text-align: center; line-height: 23px; }
.hint p.note { display: block; white-space: normal; line-height: 20px; color: #888; width: 213px; padding-top: 4px; }

.mark { position: absolute; border: 5px solid #ff2010; border-radius: 4px; }
.mark-data { left: -2px; top: 84px; width: 262px; height: 511px; }
.mark-shelf { left: 465px; top: 84px; width: 378px; height: 79px; }
.mark-tab { left: 159px; top: 941px; width: 141px; height: 46px; }
```
